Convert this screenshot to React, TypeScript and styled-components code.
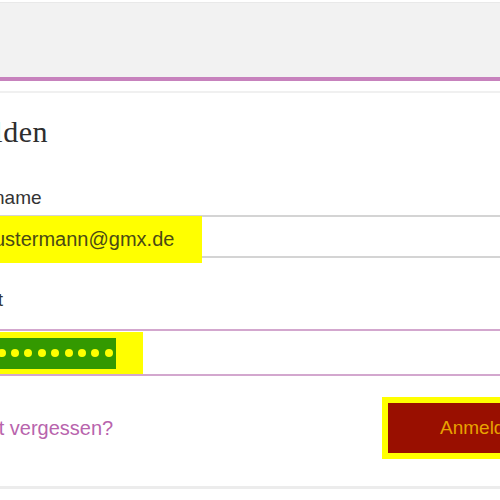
import React from 'react';
import styled, { createGlobalStyle } from 'styled-components';

const GlobalStyle = createGlobalStyle`
  html, body {
    margin: 0;
    padding: 0;
    background: #fff;
    overflow: hidden;
  }
  body {
    font-family: "Liberation Sans", Arial, sans-serif;
  }
`;

const Page = styled.div`
  width: 500px;
  height: 500px;
  overflow: hidden;
  background: #fff;
`;

const Header = styled.div`
  margin-top: 2px;
  height: 74px;
  background: #f2f2f2;
  border-top: 1px solid #e9e9e9;
`;

const AccentBar = styled.div`
  height: 4px;
  background: #c782bd;
`;

const Card = styled.div`
  margin: 10px 0 0 -94px;
  width: 684px;
  box-sizing: border-box;
  padding: 0 20px 33px 20px;
  border-top: 2px solid #f0f0f0;
  border-bottom: 3px solid #ececec;
`;

const Title = styled.h1`
  margin: 22px 0 0 -7px;
  font-family: "Liberation Serif", "Times New Roman", serif;
  font-size: 30px;
  line-height: 34px;
  font-weight: normal;
  color: #2e2e2e;
  letter-spacing: 0.5px;
`;

const Label = styled.div<{ $top: number; $shift: number }>`
  margin-top: ${(p) => p.$top}px;
  margin-left: ${(p) => p.$shift}px;
  font-size: 19px;
  line-height: 22px;
  color: #333;
`;

const Field = styled.div<{ $focused?: boolean; $top: number; $height: number }>`
  margin-top: ${(p) => p.$top}px;
  height: ${(p) => p.$height}px;
  box-sizing: border-box;
  border-top: 2px solid ${(p) => (p.$focused ? '#d3a7ce' : '#d4d4d4')};
  border-bottom: 2px solid ${(p) => (p.$focused ? '#d3a7ce' : '#d4d4d4')};
  display: flex;
  align-items: flex-start;
`;

const Mark = styled.div`
  background: #ffff00;
  display: flex;
  align-items: center;
`;

const EmailMark = styled(Mark)`
  margin-top: -1px;
  height: 47px;
  padding: 0 28px 0 8px;
  font-size: 20px;
  color: #4a4a14;
`;

const PasswordMark = styled(Mark)`
  margin-top: 1px;
  height: 42px;
  padding: 0 27px 0 14px;
`;

const Masked = styled.div`
  background: #339900;
  height: 31px;
  display: flex;
  align-items: center;
  gap: 5.4px;
  padding: 0 3px 0 4px;
`;

const Dot = styled.span`
  width: 8px;
  height: 8px;
  border-radius: 50%;
  background: #ffff00;
`;

const Actions = styled.div`
  margin-top: 27px;
  display: flex;
  justify-content: space-between;
  align-items: center;
`;

const ForgotLink = styled.a`
  font-size: 20px;
  color: #b864ad;
  text-decoration: none;
  margin-left: -4px;
`;

const SubmitButton = styled.button`
  height: 50px;
  width: 182px;
  padding: 0 0 0 52px;
  text-align: left;
  border: none;
  background: #990f00;
  color: #e8a300;
  font-family: "Liberation Sans", Arial, sans-serif;
  font-size: 19px;
  outline: 6px solid #ffff00;
`;

export default function App() {
  const dots = Array.from({ length: 13 });
  return (
    <>
      <GlobalStyle />
      <Page>
        <Header />
        <AccentBar />
        <Card>
          <Title>Anmelden</Title>
          <Label $top={38} $shift={-8}>Benutzername</Label>
          <Field $top={6} $height={43}>
            <EmailMark>max.mustermann@gmx.de</EmailMark>
          </Field>
          <Label $top={31} $shift={-1}>Passwort</Label>
          <Field $focused $top={18} $height={47}>
            <PasswordMark>
              <Masked>
                {dots.map((_, i) => (
                  <Dot key={i} />
                ))}
              </Masked>
            </PasswordMark>
          </Field>
          <Actions>
            <ForgotLink href="#">Passwort vergessen?</ForgotLink>
            <SubmitButton>Anmelden</SubmitButton>
          </Actions>
        </Card>
      </Page>
    </>
  );
}
